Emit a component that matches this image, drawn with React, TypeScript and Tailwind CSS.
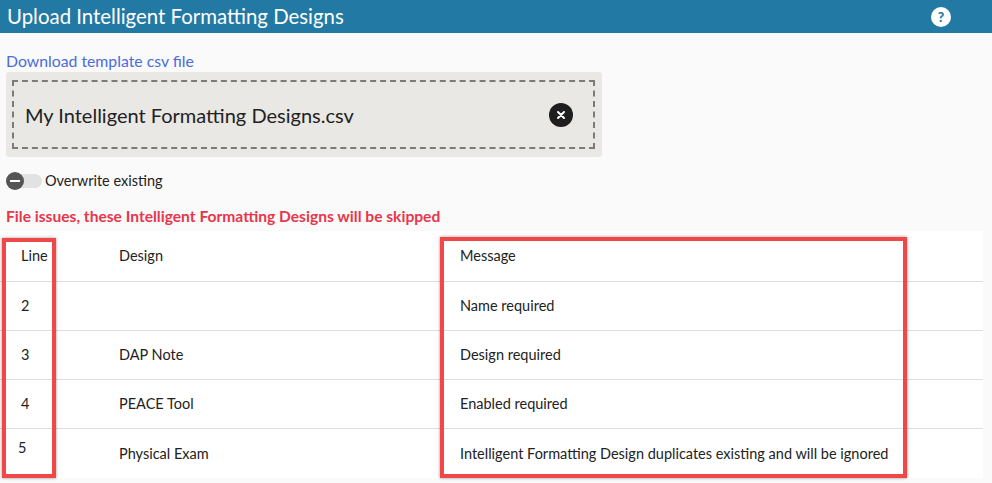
export default function App() {
  const rows = [
    ["2", "", "Name required"],
    ["3", "DAP Note", "Design required"],
    ["4", "PEACE Tool", "Enabled required"],
    ["5", "Physical Exam", "Intelligent Formatting Design duplicates existing and will be ignored"],
  ];
  return (
    <div className="w-[992px] h-[483px] bg-[#fafafa] overflow-hidden relative" style={{ fontFamily: "Lato, 'Open Sans', sans-serif" }}>
      <div className="h-[33px] bg-[#2279a3] flex items-center justify-between pl-[7px] pr-[41px]">
        <span className="text-white text-[20.4px]">Upload Intelligent Formatting Designs</span>
        <div className="w-[20px] h-[20px] rounded-full bg-white flex items-center justify-center text-[#2279a3] text-[14px] font-black leading-none">?</div>
      </div>
      <div className="px-[6px] pt-[18px]">
        <div className="text-[15.8px] text-[#4a6be0] leading-[20px]">Download template csv file</div>
        <div className="mt-[1px] w-[596px] h-[85px] bg-[#e9e8e4] rounded-[3px] p-[8px_7px_8px_6px]">
          <div className="h-full border-2 border-dashed border-[#7b7b7b] flex items-center justify-between pl-[11px] pr-[20px]">
            <span className="text-[20px] text-[#222]">My Intelligent Formatting Designs.csv</span>
            <div className="w-[24px] h-[24px] rounded-full bg-[#1e1e1e] flex items-center justify-center">
              <svg width="10" height="10" viewBox="0 0 10 10"><path d="M2 2L8 8M8 2L2 8" stroke="white" strokeWidth="2" strokeLinecap="round" /></svg>
            </div>
          </div>
        </div>
        <div className="flex items-center mt-[15px] h-[18px]">
          <div className="relative w-[36px] h-[14px] rounded-full bg-[#e2e2e2]">
            <div className="absolute left-0 top-[-2px] w-[18px] h-[18px] rounded-full bg-[#555] flex items-center justify-center">
              <div className="w-[10px] h-[2px] bg-white" />
            </div>
          </div>
          <span className="ml-[3px] text-[14.5px] text-[#222]">Overwrite existing</span>
        </div>
        <div className="mt-[16px] text-[15.6px] font-bold text-[#e8364a] leading-[20px]">File issues, these Intelligent Formatting Designs will be skipped</div>
      </div>
      <div className="mt-[5px] w-[983px] bg-white text-[14.5px] text-[#222]">
        <div className="flex h-[51px] items-center border-b border-[#ddd]">
          <div className="w-[119px] pl-[21px]">Line</div>
          <div className="w-[341px]">Design</div>
          <div>Message</div>
        </div>
        {rows.map((r, i) => (
          <div key={i} className={`flex h-[49px] items-center ${i < 3 ? "border-b border-[#ddd]" : ""}`}>
            <div className={`w-[119px] ${i === 3 ? "-mt-[12px] pl-[18px]" : "pl-[21px]"}`}>{r[0]}</div>
            <div className="w-[341px]">{r[1]}</div>
            <div>{r[2]}</div>
          </div>
        ))}
      </div>
      <div className="absolute left-[2px] top-[238px] w-[54px] h-[240px] border-[4px] border-[#f04848] shadow-[0_0_3px_rgba(0,0,0,0.4)]" />
      <div className="absolute left-[440px] top-[237px] w-[467px] h-[241px] border-[4px] border-[#f04848] shadow-[0_0_3px_rgba(0,0,0,0.4)]" />
    </div>
  );
}
